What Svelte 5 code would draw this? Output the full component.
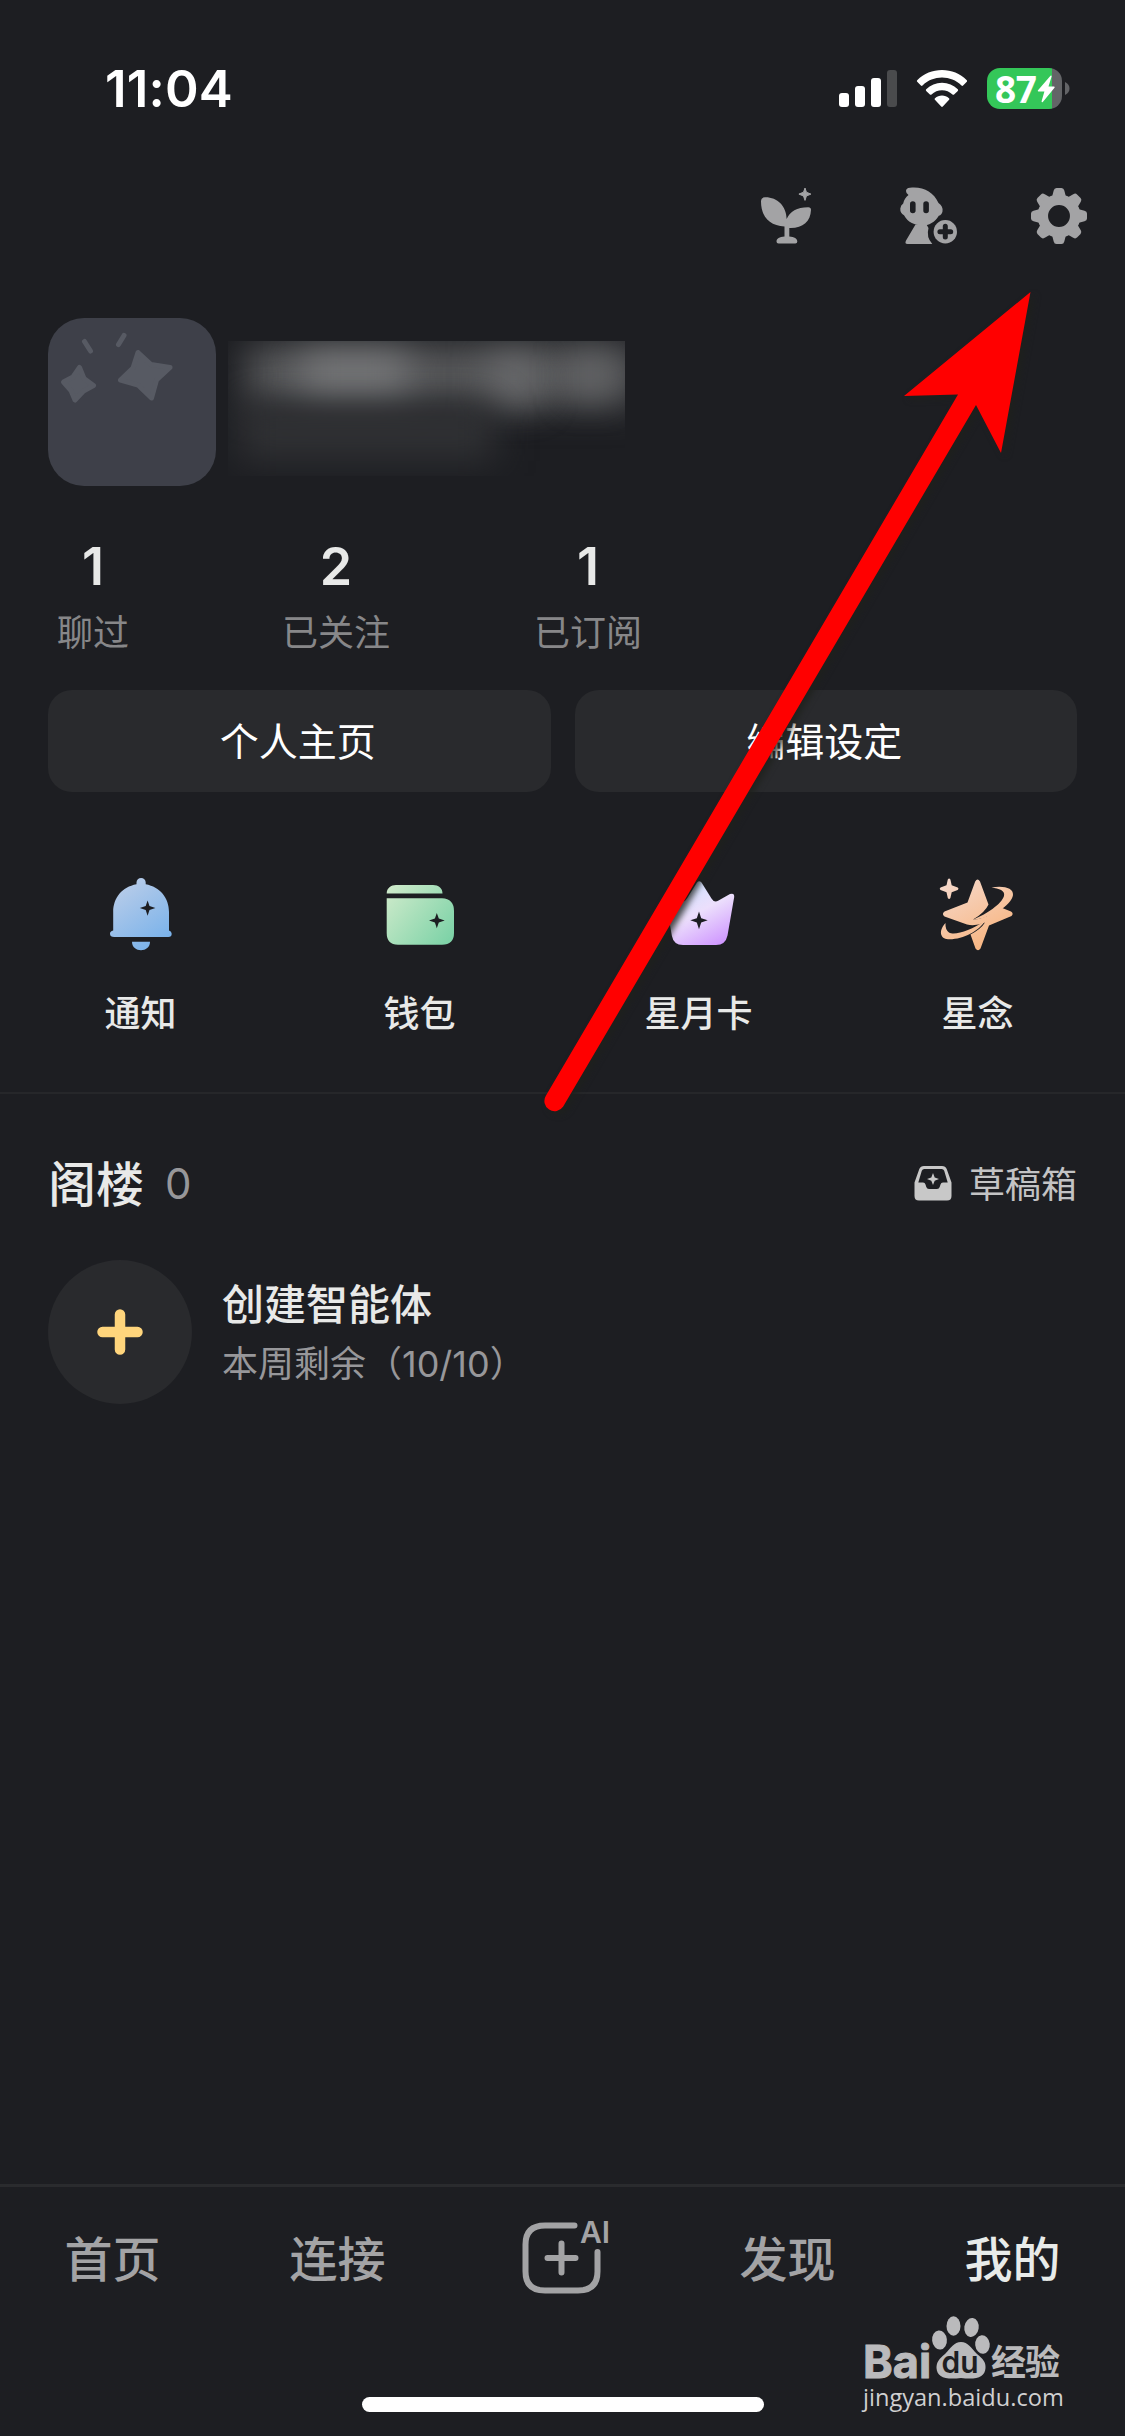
<script lang="ts">
  const stats = [
    { value: '1', label: '聊过' },
    { value: '2', label: '已关注' },
    { value: '1', label: '已订阅' },
  ];

  const actions = ['个人主页', '编辑设定'];

  const shortcuts = [
    { id: 'bell', label: '通知' },
    { id: 'wallet', label: '钱包' },
    { id: 'card', label: '星月卡' },
    { id: 'star', label: '星念' },
  ];

  const tabs = ['首页', '连接', '', '发现', '我的'];
  let active = $state('我的');

  const teeth = [0, 45, 90, 135, 180, 225, 270, 315];
</script>

<div class="screen">
  <header class="status">
    <span class="time">11:04</span>
    <div class="indicators">
      <svg class="signal" width="58" height="37" viewBox="0 0 58 37" fill="#fff">
        <rect x="0" y="23" width="10" height="14" rx="3" />
        <rect x="16" y="16" width="10" height="21" rx="3" />
        <rect x="32" y="8" width="10" height="29" rx="3" />
        <rect x="48" y="0" width="10" height="37" rx="3" fill="#4a4b4d" />
      </svg>
      <svg class="wifi" width="52" height="38" viewBox="0 0 52 38" fill="#fff">
        <path d="M1.2 10.2C8 3.600 16.500 0 26 0s18 3.600 24.800 10.200q.8.800 0 1.600l-3.700 3.700q-.8.800-1.600 0C40 10.300 33.300 7.600 26 7.600S12 10.300 6.500 15.500q-.8.800-1.600 0l-3.700-3.700q-.8-.8 0-1.600z" />
        <path d="M10.200 19.300c4.300-4.200 9.700-6.500 15.800-6.500s11.500 2.300 15.800 6.500q.8.800 0 1.600l-3.700 3.600q-.8.700-1.600 0c-2.900-2.700-6.500-4.200-10.500-4.200s-7.600 1.500-10.500 4.200q-.8.700-1.600 0l-3.700-3.600q-.8-.8 0-1.600z" />
        <path d="M19 28.200c2-1.800 4.300-2.700 7-2.700s5 .9 7 2.700q.9.800.1 1.600l-6.300 6.700q-.8.800-1.600 0l-6.300-6.700q-.8-.8.100-1.600z" />
      </svg>
      <div class="battery">
        <div class="cell">
          <span class="percent">87</span>
          <svg class="bolt" width="18" height="28" viewBox="0 0 18 28" fill="#fff">
            <path d="M13.500.7 1 15.200q-.8 1 .4 1.200h6L4.600 26.200q-.1 1.600 1.200.8L17.500 12.800q.7-1-.5-1.200h-5.500L14.600 1.400q.1-1.200-1.100-.7z" />
          </svg>
        </div>
        <svg class="nub" width="5" height="13" viewBox="0 0 5 13"><path d="M0 0c6 2.500 6 10.500 0 13z" fill="#636467" /></svg>
      </div>
    </div>
  </header>

  <nav class="tools">
    <svg width="52" height="58" viewBox="0 0 52 58" fill="#a3a3a5">
      <path d="M1 14.500Q1 10.300 5 10.300C17 10 26.500 19 26.600 32Q31.500 20.500 48 20.200 51 20 51 23C50.500 35 42.500 41.500 29.300 41V49.500c5 .3 8 2.300 8 5q0 2-2 2H18.500q-2 0-2-2c0-2.700 3-4.700 8-5V39.500C10 39 1 30 1 14.500z" />
      <path d="M45 1l1.400 4.200 4.500 1.900-4.500 1.900L45 13.400l-1.500-4.400-4.600-1.900 4.600-1.900z" stroke="#a3a3a5" stroke-linejoin="round" />
    </svg>
    <svg class="add-friend" width="58" height="58" viewBox="0 0 58 58">
      <path fill="#a3a3a5" fill-rule="evenodd" d="M6 4Q6 1.200 10 .8C23-.7 33.500 5 38.500 16q4.800 3 4 8.500-.7 3.500-3.700 4.300C35 35.500 29 38.500 22 38.500S8 35.500 4 28.300Q0 26 .3 21.500.8 18 3.200 16.600 4.300 11 8.500 8 6 6.600 6 4zM10 17v6.500a2.800 2.800 0 0 0 5.600 0V17A2.800 2.800 0 0 0 10 17zm13.300 0v6.500a2.800 2.800 0 0 0 5.600 0V17a2.800 2.800 0 0 0-5.600 0z" />
      <path fill="#a3a3a5" d="M15.500 37.500h11L28.500 41q-2.500 9 3.800 16H7.500q-3 0-1.600-3.300z" />
      <circle cx="45.300" cy="44.700" r="13.300" fill="#1d1e22" />
      <circle cx="45.300" cy="44.700" r="11.700" fill="#a3a3a5" />
      <path d="M45.300 39.300v10.800M39.900 44.700h10.800" stroke="#1d1e22" stroke-width="5" stroke-linecap="round" />
    </svg>
    <svg class="gear" width="58" height="58" viewBox="-29 -29 58 58" fill="#a3a3a5">
      {#each teeth as angle}
        <path d="M-7-19-5.300-25.500Q-4.700-28-2.500-28h5Q4.700-28 5.300-25.500L7-19z" transform="rotate({angle})" />
      {/each}
      <circle r="16.200" fill="none" stroke="#a3a3a5" stroke-width="10.500" />
    </svg>
  </nav>

  <section class="profile">
    <svg class="avatar" width="168" height="168" viewBox="0 0 168 168">
      <rect width="168" height="168" rx="36" fill="#3e4049" />
      <g fill="#575a63" stroke="#575a63" stroke-linejoin="round" stroke-linecap="round" stroke-width="5">
        <path d="M31.500 49.500 36 60.500 45.500 67.500 35.500 73 27 82 23 72.500 15.500 64 25 59z" />
        <path d="M90 34.500 103 46.500 122 49.500 108.500 62 103.500 80 90 67 72.500 62 85 50z" />
        <path d="M36.500 23.500l6 9.500M76 17.500l-5.500 9" />
      </g>
    </svg>
    <div class="masked" aria-hidden="true">
      <i class="glow line"></i>
      <i class="glow a"></i>
      <i class="glow b"></i>
      <i class="glow c"></i>
      <i class="glow sub"></i>
    </div>
  </section>

  <section class="stats">
    {#each stats as stat}
      <div class="stat">
        <strong>{stat.value}</strong>
        <span>{stat.label}</span>
      </div>
    {/each}
  </section>

  <section class="actions">
    {#each actions as action}
      <button>{action}</button>
    {/each}
  </section>

  <section class="shortcuts">
    {#each shortcuts as item}
      <button class="shortcut">
        {#if item.id === 'bell'}
          <svg width="84" height="84" viewBox="0 0 84 84">
            <defs>
              <linearGradient id="bell" x1=".1" y1="0" x2=".7" y2="1"><stop offset="0" stop-color="#bfcfe9" /><stop offset="1" stop-color="#79b2ea" /></linearGradient>
            </defs>
            <path fill="url(#bell)" d="M37.500 11.300V9.600a4.600 4.600 0 0 1 9.200 0v1.700C61 14 70 25 70 39V57.500q2.700.7 2.700 3.300 0 3.200-3.400 3.200h-54Q11 64 11 60.800q0-2.600 3.200-3.300V39C14.200 25 23 14 37.500 11.300zM33 68.700H51C51 80 33 80 33 68.700z" />
            <path d="M48.600 27.500l1.900 5.500 5.900 2-5.900 2-1.900 5.700L46.700 37l-5.900-2 5.900-2z" fill="#1d1e22" />
          </svg>
        {:else if item.id === 'wallet'}
          <svg width="84" height="84" viewBox="0 0 84 84">
            <defs>
              <linearGradient id="wallet" x1="0" y1=".1" x2="1" y2=".8"><stop offset="0" stop-color="#cdeaca" /><stop offset="1" stop-color="#7fd3a8" /></linearGradient>
            </defs>
            <path fill="url(#wallet)" d="M8.700 20.500C8.700 15 13 12 18 12H55C60.500 12 64.500 15 64.500 20.500zM8.700 25.300H64Q76 26 76 38V60Q76 71.700 64 71.700H20Q8.700 71.700 8.700 60z" />
            <path d="M58.800 40l2 5.600 5.900 2-5.900 2-2 5.700-1.900-5.700-5.900-2 5.900-2z" fill="#1d1e22" />
          </svg>
        {:else if item.id === 'card'}
          <svg width="84" height="84" viewBox="1 0 84 84">
            <defs>
              <linearGradient id="card" x1=".25" y1=".05" x2=".8" y2="1"><stop offset="0" stop-color="#cfe2ff" /><stop offset=".45" stop-color="#ecdffc" /><stop offset="1" stop-color="#cf96ff" /></linearGradient>
            </defs>
            <path fill="url(#card)" d="M41 9.500q2-2.500 4.500 0L55.500 25.500q2.500 4.500 7 2L74 21q4.500-1.500 4.200 3L71.500 62.500Q69.500 72 60 72H27Q17.500 72 15.800 62.500L9.300 24.500q-.3-4.500 4.200-3L24 27.500q4.500 2.500 7-2z" />
            <path d="M43 38.500l2.200 6.800 6.500 2-6.500 2.200L43 56.300l-2.200-6.800-6.500-2.200 6.500-2z" fill="#1d1e22" />
          </svg>
        {:else}
          <svg width="84" height="84" viewBox="3 3 84 84">
            <defs>
              <linearGradient id="star" gradientUnits="userSpaceOnUse" x1="20" y1="8" x2="60" y2="80"><stop offset="0" stop-color="#f5d8ca" /><stop offset="1" stop-color="#f8b37c" /></linearGradient>
            </defs>
            <g fill="url(#star)">
              <path d="M14.800 9.500q1.300-1.800 2.600 0l1.300 5.800 6 2.200q1.700 1.300 0 2.500l-6 2.300-1.300 5.800q-1.300 1.700-2.600 0L13.500 22.300l-6-2.300q-1.600-1.200 0-2.500l6-2.200z" />
              <path d="M42.200 11.500q2.300-4 4.800 0L55.500 34.500Q52 42.500 40 49.500 54 49 68 37.500L78 41.500q3 2.200.5 4.500L56 55.500 47.500 78.500q-2.500 3.500-5 0L37.500 64.500Q48 59 52 52.500 42 56.500 34 54.500L11.500 46.500q-3.200-2.700 0-5L34.500 32.500z" />
              <path d="M58.500 17.500C71 15.500 80.500 18 80 25 78.500 35 58 49 40 49.500 54 44 68.500 34 71 26 72.500 20.500 66 18.500 58.500 17.500zM12.500 53C5 61 7.500 69 15 69.200 29 70 46 61 52 51 38 60 22 66 16 62.500Q12 59.500 12.500 53z" />
            </g>
          </svg>
        {/if}
        <span>{item.label}</span>
      </button>
    {/each}
  </section>

  <main class="loft">
    <div class="loft-head">
      <h2>阁楼</h2>
      <span class="count">0</span>
      <button class="drafts">
        <svg width="38" height="36" viewBox="0 0 38 36">
          <path fill="#c8c8c8" fill-rule="evenodd" d="M10 1H28q3.500 0 4.700 3L37.500 17.500V31q0 4.500-4.500 4.500H5Q.5 35.500.5 31V17.500L5.300 4Q6.500 1 10 1zM10.300 4Q8.500 4 7.800 5.800L4.300 17.500H9q2 0 2.500 2l.8 2.500q.7 2 2.700 2h8q2 0 2.700-2l.8-2.500q.5-2 2.500-2h4.700L30.200 5.800Q29.500 4 27.700 4z" />
          <path fill="#c8c8c8" d="M19 8l1.700 4.500 4.300 1.600-4.300 1.600L19 20l-1.700-4.300-4.300-1.600 4.300-1.600z" />
        </svg>
        <span>草稿箱</span>
      </button>
    </div>
    <div class="create">
      <div class="plus">
        <svg width="46" height="46" viewBox="0 0 46 46"><path d="M23 5.500v35M5.500 23h35" stroke="#ffd57c" stroke-width="10.500" stroke-linecap="round" /></svg>
      </div>
      <div class="create-text">
        <h3>创建智能体</h3>
        <p>本周剩余（10/10）</p>
      </div>
    </div>
  </main>

  <footer class="tabbar">
    {#each tabs as tab}
      {#if tab}
        <button class="tab" class:active={tab === active} onclick={() => (active = tab)}>{tab}</button>
      {:else}
        <button class="tab" aria-label="AI">
          <svg width="98" height="84" viewBox="0 0 98 84" fill="none" stroke="#a3a3a5" stroke-width="6" stroke-linecap="round">
            <path d="M60.500 11.500H31Q11.500 11.500 11.500 30.500V57.500Q11.500 76.500 31 76.500H64Q83.500 76.500 83.500 57.500V38M47.500 29.500v29M33.500 44h28" />
            <text x="66" y="29">AI</text>
          </svg>
        </button>
      {/if}
    {/each}
  </footer>
  <div class="home-bar"></div>

  <div class="watermark">
    <div class="brand">
      <span class="bai">Bai</span>
      <svg width="60" height="66" viewBox="0 0 60 66" fill="#bababc">
        <ellipse cx="8.500" cy="24" rx="7.400" ry="9.600" transform="rotate(-6 8.500 24)" />
        <ellipse cx="22.500" cy="10" rx="7" ry="9.700" />
        <ellipse cx="40.500" cy="11.500" rx="7.200" ry="9.500" transform="rotate(8 40.500 11.500)" />
        <ellipse cx="51.500" cy="28.500" rx="7.300" ry="9.300" transform="rotate(-6 51.500 28.500)" />
        <path d="M30 26C37 26 40 32 46 38 52 43 55 46 54.500 52 54 61 46 64 30 62 14 64 6 61 5.500 52 5.500 46 8 43 14 38 20 32 23 26 30 26z" />
        <text x="29" y="57" text-anchor="middle">du</text>
      </svg>
      <span class="jy">经验</span>
    </div>
    <span class="url">jingyan.baidu.com</span>
  </div>

  <svg class="pointer" width="500" height="840" viewBox="0 0 500 840">
    <path d="M490.500 12 364 116 418 114.500 6 815.500A10 10 0 0 0 23.200 826.500L436 125 461 173z" fill="#f00" />
  </svg>
</div>

<style>
  :global(body) {
    background: #1d1e22;
  }

  .screen {
    position: relative;
    display: flex;
    flex-direction: column;
    width: 1125px;
    height: 2436px;
    overflow: hidden;
    background: #1d1e22;
    color: #e8e9e8;
    font-family: Inter, "Noto Sans CJK SC", sans-serif;
  }

  button {
    padding: 0;
    border: none;
    background: none;
    color: inherit;
    font: inherit;
  }

  h2, h3, p {
    margin: 0;
  }

  svg {
    display: block;
    flex: none;
    overflow: visible;
  }

  .status {
    display: flex;
    align-items: center;
    justify-content: space-between;
    height: 177px;
    padding: 0 55px 0 105px;
    box-sizing: border-box;
  }

  .time {
    color: #fff;
    font-size: 51px;
    font-weight: 600;
    letter-spacing: 0.2px;
  }

  .indicators {
    display: flex;
    align-items: center;
  }

  .wifi {
    margin: 0 19px 0 19px;
  }

  .battery {
    display: flex;
    align-items: center;
    gap: 3px;
  }

  .cell {
    display: flex;
    align-items: center;
    width: 75px;
    height: 41px;
    border-radius: 13px;
    background: linear-gradient(90deg, #34c759 87%, #636467 87%);
  }

  .percent {
    padding-left: 8px;
    color: #fff;
    font: 700 37px "Open Sans", sans-serif;
    letter-spacing: -0.3px;
  }

  .tools {
    display: flex;
    align-items: center;
    height: 78px;
    padding-left: 760px;
  }

  .add-friend {
    margin-left: 88px;
  }

  .gear {
    margin-left: 72px;
  }

  .profile {
    display: flex;
    gap: 12px;
    margin-top: 63px;
    padding-left: 48px;
  }

  .masked {
    position: relative;
    width: 397px;
    height: 135px;
    margin-top: 23px;
    overflow: hidden;
  }

  .glow {
    position: absolute;
    filter: blur(18px);
  }

  .line {
    left: 18px;
    right: -14px;
    top: 4px;
    height: 60px;
    background: #58595b;
  }

  .a {
    left: 72px;
    top: 12px;
    width: 108px;
    height: 44px;
    background: #78797b;
  }

  .b {
    left: 262px;
    top: 16px;
    width: 48px;
    height: 44px;
    background: #6c6d6f;
  }

  .c {
    left: 345px;
    top: 14px;
    width: 34px;
    height: 40px;
    background: #68696b;
  }

  .sub {
    left: 10px;
    top: 64px;
    width: 258px;
    height: 56px;
    background: #303134;
  }

  .stats {
    display: flex;
    gap: 144px;
    margin-top: 49px;
    padding-left: 48px;
  }

  .stat {
    display: flex;
    flex-direction: column;
    align-items: center;
    min-width: 90px;
  }

  .stat strong {
    font-size: 52px;
    font-weight: 600;
    line-height: 64px;
  }

  .stat span {
    margin-top: 7px;
    color: #878789;
    font-size: 36px;
    line-height: 54px;
  }

  .actions {
    display: grid;
    grid-template-columns: 1fr 1fr;
    gap: 24px;
    margin: 30px 48px 0;
  }

  .actions button {
    height: 102px;
    padding: 0 3px 5px 0;
    border-radius: 24px;
    background: #292a2d;
    color: #fff;
    font-size: 39px;
  }

  .shortcuts {
    display: grid;
    grid-template-columns: repeat(4, 279px);
    height: 302px;
    padding: 81px 0 0 1px;
    box-sizing: border-box;
    border-bottom: 2px solid #26272a;
  }

  .shortcut {
    display: flex;
    flex-direction: column;
    align-items: center;
    font-size: 36px;
    font-weight: 500;
    line-height: 54px;
  }

  .shortcut span {
    margin-top: 30px;
  }

  .loft {
    flex: 1;
    padding: 0 48px;
  }

  .loft-head {
    display: flex;
    align-items: center;
    height: 72px;
    margin-top: 53px;
  }

  h2 {
    padding-bottom: 5px;
    font-size: 48px;
    font-weight: 500;
  }

  .count {
    margin-left: 21px;
    color: #97979a;
    font-size: 42px;
  }

  .drafts {
    display: flex;
    align-items: center;
    gap: 17px;
    margin-left: auto;
    color: #c3c3c4;
    font-size: 36px;
  }

  .drafts span {
    padding-bottom: 2px;
  }

  .create {
    display: flex;
    align-items: center;
    gap: 30px;
    margin-top: 41px;
  }

  .create-text {
    padding-top: 4px;
  }

  .plus {
    display: flex;
    align-items: center;
    justify-content: center;
    width: 144px;
    height: 144px;
    border-radius: 50%;
    background: #292a2d;
  }

  h3 {
    font-size: 42px;
    font-weight: 500;
    line-height: 60px;
  }

  p {
    color: #97979a;
    font-size: 36px;
    line-height: 58px;
  }

  .tabbar {
    display: flex;
    height: 147px;
    border-top: 3px solid #2a2b2e;
  }

  .tab {
    display: flex;
    flex: 1;
    align-items: center;
    justify-content: center;
    padding-bottom: 9px;
    color: #a3a3a5;
    font-size: 48px;
    font-weight: 500;
  }

  .tab.active {
    color: #e8ebe9;
  }

  .tab text {
    fill: #a3a3a5;
    stroke: none;
    font: 600 30px Inter, sans-serif;
  }

  .home-bar {
    width: 402px;
    height: 15px;
    margin: 63px auto 24px;
    border-radius: 8px;
    background: #fff;
  }

  .watermark {
    position: absolute;
    left: 863px;
    top: 2316px;
    color: #bababc;
  }

  .brand {
    display: flex;
    align-items: flex-end;
    height: 66px;
  }

  .brand text {
    fill: #1d1e22;
    font: 600 30px Inter, sans-serif;
  }

  .bai {
    width: 68px;
    font: 700 45px/40px Inter, sans-serif;
    -webkit-text-stroke: 1px #bababc;
  }

  .jy {
    margin-bottom: 2px;
    font-size: 35px;
    font-weight: 700;
    line-height: 36px;
    letter-spacing: -1px;
  }

  .url {
    display: block;
    color: #d0d0d1;
    font: 23.6px/30px "Open Sans", sans-serif;
  }

  .pointer {
    position: absolute;
    left: 540px;
    top: 280px;
    filter: drop-shadow(4px 3px 3px rgba(30, 32, 28, 0.8));
  }
</style>
